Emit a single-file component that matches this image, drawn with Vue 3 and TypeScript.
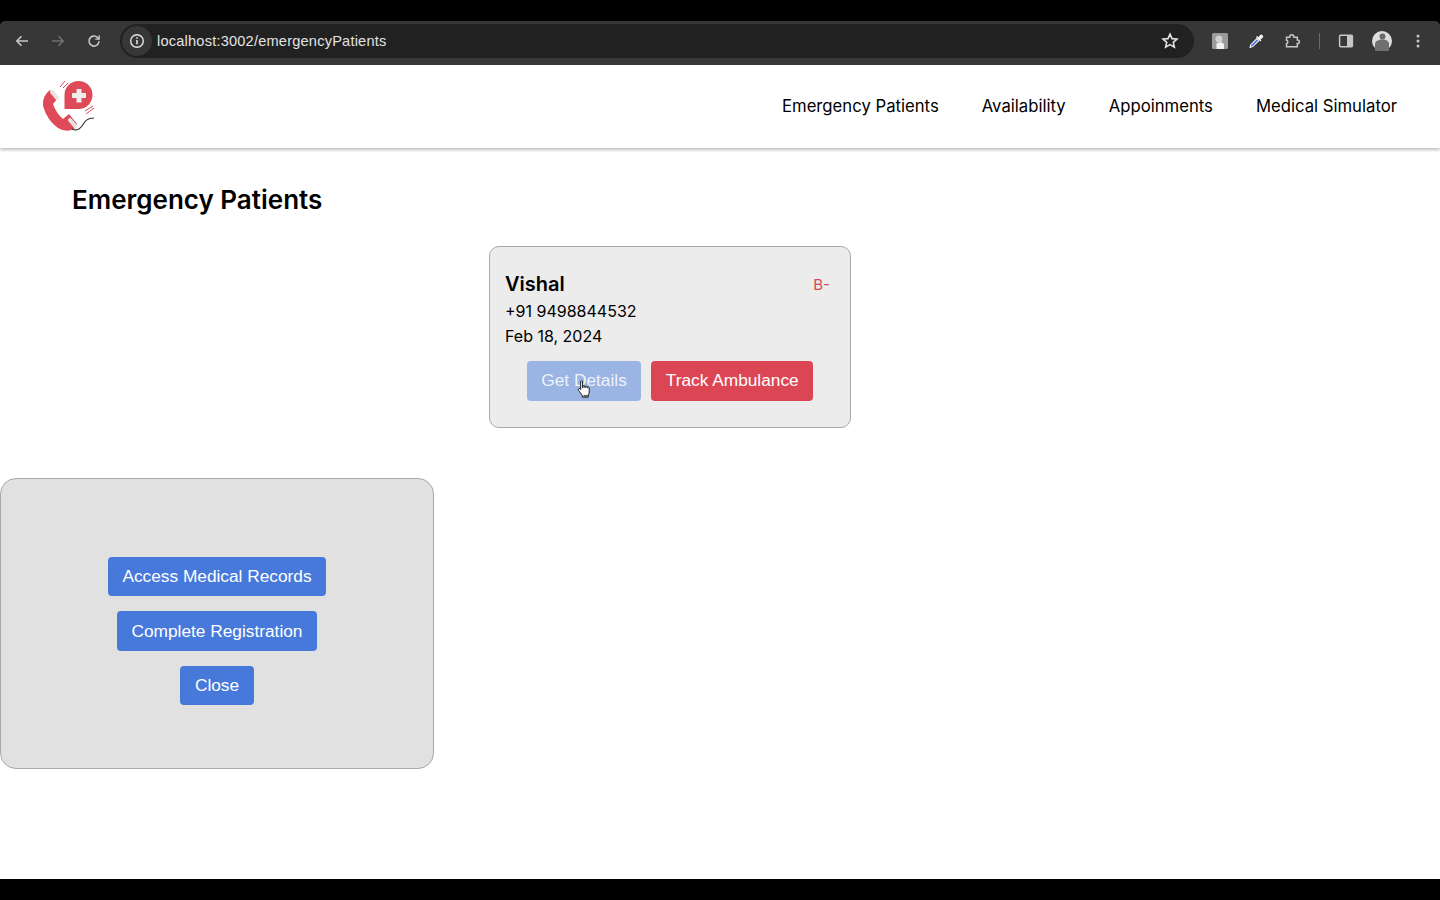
<script setup lang="ts">
const navLinks: string[] = [
  "Emergency Patients",
  "Availability",
  "Appoinments",
  "Medical Simulator",
];

const modalActions: string[] = [
  "Access Medical Records",
  "Complete Registration",
  "Close",
];
</script>

<template>
  <div class="screen">
    <div class="browser-bar">
      <div class="browser-nav">
        <svg class="tool" viewBox="0 0 16 16" fill="none" stroke="#c4c7c5" stroke-width="1.6">
          <path d="M14 8H3M7.500 3.200 2.800 8l4.700 4.800" />
        </svg>
        <svg class="tool" viewBox="0 0 16 16" fill="none" stroke="#6f7170" stroke-width="1.6">
          <path d="M2 8h11M8.500 3.200 13.200 8l-4.700 4.800" />
        </svg>
        <svg class="tool" viewBox="0 0 16 16" fill="none" stroke="#c4c7c5" stroke-width="1.6">
          <path d="M13 8.200A5 5 0 1 1 11.600 4.600L13 6" />
          <path d="M13.200 2.200v4h-4" stroke-width="1.3" />
        </svg>
      </div>
      <div class="omnibox">
        <span class="site-info">
          <svg viewBox="0 0 16 16" width="16" height="16" fill="none" stroke="#e3e3e3" stroke-width="1.4">
            <circle cx="8" cy="8" r="6.300" />
            <path d="M8 7v4.200" stroke-width="1.6" />
            <path d="M8 4.200v1.500" stroke-width="1.6" />
          </svg>
        </span>
        <span class="url">localhost:3002/emergencyPatients</span>
        <svg class="star" viewBox="0 0 16 16" width="18" height="18" fill="none" stroke="#e3e3e3" stroke-width="1.4">
          <path d="m8 1.900 1.800 4 4.400.4-3.300 2.900 1 4.300L8 11.200l-3.900 2.300 1-4.300-3.300-2.900 4.400-.4z" />
        </svg>
      </div>
      <div class="browser-tools">
        <span class="ext-thumb">
          <svg viewBox="0 0 16 16" width="16" height="16">
            <rect width="16" height="16" rx="1.500" fill="#9a9a9a" />
            <circle cx="7" cy="6" r="3.500" fill="#cfcfcf" />
            <path d="M4.500 16v-5c0-1.500 2-1.500 2 0V9.500c1-.6 5.500 0 5.500 2V16z" fill="#f1f1f1" />
          </svg>
        </span>
        <svg class="tool" viewBox="0 0 16 16">
          <path d="M9 5.500 2.800 11.700 2 14.400l2.700-.8L10.900 7.400z" fill="#3f6fd8" stroke="#f2f2f2" stroke-width="1.100" />
          <path d="m8.500 3.500 4.400 4.400M10.600 5l2-2.300c1-.9 2.400.5 1.500 1.500l-2.300 2z" fill="#f2f2f2" stroke="#f2f2f2" stroke-width="1.600" />
        </svg>
        <svg class="tool puzzle" viewBox="0 0 16 16" fill="none" stroke="#c4c7c5" stroke-width="1.5">
          <path d="M1.500 4.200h3.200c0-3.200 4.200-3.200 4.200 0h3.400v2.700c2.800 0 2.800 3.600 0 3.600v3.200H1.500v-3c1.800-.5 1.800-2.900 0-3.400z" />
        </svg>
        <span class="divider"></span>
        <svg class="tool" viewBox="0 0 16 16">
          <rect x="1.600" y="2.300" width="12.800" height="11.400" rx="1" fill="none" stroke="#c4c7c5" stroke-width="1.5" />
          <rect x="9" y="2.300" width="5.400" height="11.400" fill="#c4c7c5" />
        </svg>
        <span class="avatar">
          <svg viewBox="0 0 20 20" width="20" height="20">
            <circle cx="10" cy="10" r="10" fill="#dedede" />
            <circle cx="10.500" cy="5.500" r="3" fill="#6a6a6a" />
            <path d="M3 20v-7c0-3 3.500-4.500 7.500-4.500s6.500 2 6.500 4.500v7z" fill="#6f6f6f" />
          </svg>
        </span>
        <svg class="tool dots" viewBox="0 0 16 16" fill="#c4c7c5">
          <circle cx="8" cy="3" r="1.500" />
          <circle cx="8" cy="8" r="1.500" />
          <circle cx="8" cy="13" r="1.500" />
        </svg>
      </div>
    </div>

    <div class="page">
      <header class="topbar">
        <svg class="logo" viewBox="42 79 54 54">
          <path d="M64.500 108V94A14 14 0 1 1 78.500 108Z" fill="#df4a58" />
          <path d="M76.500 88h5v4h4.500v5h-4.500v4.500h-5V97H72v-5h4.500z" fill="#f0eded" />
          <path d="M50 89 58 97 53 103Q56 112 63 118L69 113 77 123 74 128Q66 132 58 127 47 119 43 105 42 95 50 89Z" fill="#df4a58" />
          <path d="M52 91 57 97M70 119 75 125" stroke="#e8e4e2" stroke-width="4" stroke-linecap="round" fill="none" />
          <path d="M72 128C76 130 79 129 82 125 85 120 87 117 94 117" fill="none" stroke="#333" stroke-width="1.2" />
          <path d="M60 86 65 80M63 87 68 82M85 110 93 105M86 113 94 107" fill="none" stroke="#df4a58" stroke-width="1" />
        </svg>
        <nav class="nav-links">
          <a v-for="link in navLinks" :key="link" class="nav-link">{{ link }}</a>
        </nav>
      </header>

      <h1 class="title">Emergency Patients</h1>

      <section class="patient-card">
        <div class="card-head">
          <span class="patient-name">Vishal</span>
          <span class="blood-group">B-</span>
        </div>
        <p class="card-line">+91 9498844532</p>
        <p class="card-line">Feb 18, 2024</p>
        <div class="card-actions">
          <button class="btn btn-blue btn-faded" type="button">Get Details</button>
          <button class="btn btn-red" type="button">Track Ambulance</button>
          <svg class="cursor" viewBox="0 0 16 20" width="16" height="19">
            <path d="M4.500 1.800c0-1.300 2-1.300 2 0V8h.5V6.800c0-1.200 1.900-1.200 1.900 0V8h.4V7.300c0-1.200 1.900-1.200 1.900 0v1h.4c0-1.100 1.900-1.100 1.900 0v4.200c0 1.600-.5 2.500-1 3.500v2H6.200v-2c-1.300-1.200-2.600-3.200-4-5.300-.8-1.300.8-2.400 1.800-1.300l.5.700z" fill="#fff" stroke="#111" stroke-width="1" stroke-linejoin="round" />
            <path d="M7.500 15.700h4.500v2H7.500z" fill="#555" />
          </svg>
        </div>
      </section>

      <section class="modal">
        <button v-for="action in modalActions" :key="action" class="btn btn-blue" type="button">
          {{ action }}
        </button>
      </section>
    </div>
  </div>
</template>

<style>
html,
body {
  margin: 0;
  background: #000;
}
</style>

<style scoped>
.screen {
  width: 1440px;
  height: 900px;
  overflow: hidden;
  box-sizing: border-box;
  padding: 21px 0;
  background: #000;
  display: flex;
  flex-direction: column;
  font-family: Inter, "Liberation Sans", sans-serif;
}

.browser-bar {
  height: 44px;
  flex: none;
  display: flex;
  align-items: center;
  background: #373737;
  border-radius: 5px 5px 0 0;
  box-sizing: border-box;
  padding: 0 14px 4px 14px;
}

.browser-nav {
  display: flex;
  align-items: center;
  gap: 20px;
  margin-right: 18px;
}

.tool {
  width: 16px;
  height: 16px;
  flex: none;
}

.omnibox {
  width: 1074px;
  height: 34px;
  flex: none;
  display: flex;
  align-items: center;
  background: #212121;
  border-radius: 17px;
  box-sizing: border-box;
  padding: 0 15px 0 2px;
}

.site-info {
  width: 30px;
  height: 30px;
  border-radius: 50%;
  background: #373737;
  display: flex;
  align-items: center;
  justify-content: center;
  margin-right: 5px;
}

.url {
  flex: 1;
  color: #e3e3e3;
  font-size: 14.6px;
  font-family: "Liberation Sans", Arial, sans-serif;
  letter-spacing: 0.2px;
}

.browser-tools {
  display: flex;
  align-items: center;
  margin-left: 18px;
  gap: 20px;
}

.ext-thumb {
  display: flex;
}

.puzzle {
  margin-left: 1px;
}

.divider {
  width: 1px;
  height: 16px;
  background: #6a6a6a;
  margin: 0 -2px;
}

.avatar {
  display: flex;
  margin: 0 -2px;
}

.page {
  flex: 1;
  background: #fff;
  min-height: 0;
}

.topbar {
  height: 83px;
  box-sizing: border-box;
  display: flex;
  align-items: center;
  justify-content: space-between;
  padding: 0 43px 0 42px;
  background: #fff;
  box-shadow: 0 2px 3px rgba(0, 0, 0, 0.25);
}

.logo {
  width: 54px;
  height: 54px;
}

.nav-links {
  display: flex;
  gap: 43px;
  padding-bottom: 2px;
}

.nav-link {
  color: #000;
  font-size: 16.7px;
  font-weight: 400;
}

.title {
  margin: 35px 0 30px 72px;
  font-size: 26px;
  line-height: 33px;
  font-weight: 600;
  color: #000;
}

.patient-card {
  width: 362px;
  height: 182px;
  margin-left: 489px;
  box-sizing: border-box;
  padding: 22px 15px 0;
  background: #ececec;
  border: 1px solid #a9a9a9;
  border-radius: 10px;
}

.card-head {
  display: flex;
  justify-content: space-between;
  align-items: center;
  padding-right: 5px;
  height: 30px;
}

.patient-name {
  font-size: 20px;
  font-weight: 600;
  color: #000;
}

.blood-group {
  font-size: 15px;
  color: #dc4654;
}

.card-line {
  margin: 0;
  height: 24.5px;
  line-height: 24.5px;
  font-size: 16px;
  color: #000;
}

.card-actions {
  position: relative;
  display: flex;
  justify-content: center;
  gap: 10px;
  margin-top: 13px;
}

.cursor {
  position: absolute;
  left: 71px;
  top: 19px;
}

.btn {
  height: 39.6px;
  padding: 0 14.5px;
  border: 0;
  border-radius: 4px;
  color: #fff;
  font-family: "Liberation Sans", Arial, sans-serif;
  font-size: 17.3px;
}

.btn-blue {
  background: #4779db;
}

.btn-faded {
  background: #9ab4e3;
  color: #eef2fa;
}

.btn-red {
  background: #dc4654;
}

.modal {
  width: 434px;
  height: 291px;
  margin-top: 50px;
  box-sizing: border-box;
  padding-top: 15px;
  display: flex;
  flex-direction: column;
  align-items: center;
  justify-content: center;
  gap: 15px;
  background: #e1e1e1;
  border: 1px solid #a9a9a9;
  border-radius: 16px;
}
</style>
